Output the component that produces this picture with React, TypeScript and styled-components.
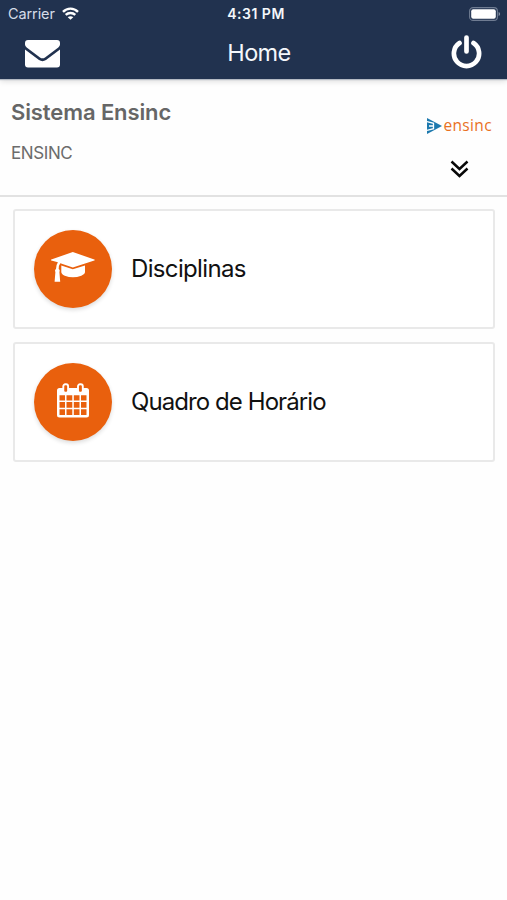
import React from 'react';
import styled, { createGlobalStyle } from 'styled-components';

const GlobalStyle = createGlobalStyle`
  * { box-sizing: border-box; }
  body { margin: 0; background: #fefefe; font-family: Inter, "Liberation Sans", sans-serif; }
  svg { display: block; flex: none; }
`;

const Screen = styled.div`
  height: 900px;
  display: flex;
  flex-direction: column;
  overflow: hidden;
`;

const Header = styled.header`
  height: 79px;
  flex: none;
  background: #21324f;
  color: #f4f7fb;
  box-shadow: 0 1px 1px #b4bac4, 0 2px 6px rgba(0, 0, 0, 0.15);
`;

const Bar = styled.div<{ $height: number; $padding: string }>`
  display: grid;
  grid-template-columns: 1fr auto 1fr;
  align-items: center;
  height: ${p => p.$height}px;
  padding: ${p => p.$padding};
`;

const Side = styled.div<{ $end?: boolean }>`
  display: flex;
  align-items: center;
  justify-content: ${p => (p.$end ? 'flex-end' : 'flex-start')};
  gap: 7px;
`;

const Label = styled.span<{ $size: number; $weight?: number; $spacing?: number; $color?: string }>`
  font-size: ${p => p.$size}px;
  font-weight: ${p => p.$weight ?? 400};
  letter-spacing: ${p => p.$spacing ?? 0}px;
  color: ${p => p.$color ?? 'inherit'};
  line-height: 1.2;
  white-space: nowrap;
`;

const ScreenTitle = styled(Label)`
  padding: 2px 0 0 11px;
`;

const Clock = styled(Label)`
  padding: 2px 0 0 3px;
`;

const IconButton = styled.button`
  padding: 0;
  border: 0;
  background: none;
  color: inherit;
`;

const Profile = styled.section`
  height: 118px;
  flex: none;
  display: flex;
  justify-content: space-between;
  padding: 20px 15px 0 11px;
  border-bottom: 2px solid #e2e2e2;
`;

const Names = styled.div`
  display: flex;
  flex-direction: column;
  gap: 18px;
`;

const Brand = styled.div`
  display: flex;
  flex-direction: column;
  align-items: center;
  padding-top: 17px;
  gap: 24px;
`;

const Logo = styled.div`
  display: flex;
  align-items: center;
  height: 20px;
  gap: 1px;
`;

const LogoName = styled.span`
  font: 500 15.5px/18px "Open Sans", sans-serif;
  letter-spacing: 0.35px;
  color: #e9711f;
  margin-top: -3px;
`;

const Menu = styled.main`
  display: flex;
  flex-direction: column;
  gap: 13px;
  padding: 12px 12px 0 13px;
`;

const Card = styled.a`
  height: 120px;
  display: flex;
  align-items: center;
  gap: 19px;
  padding-left: 19px;
  border: 2px solid #e9e9e9;
  border-radius: 3px;
  background: #fff;
  color: #111;
`;

const Disc = styled.div`
  width: 78px;
  height: 78px;
  border-radius: 50%;
  background: #e9600d;
  display: grid;
  place-items: center;
  box-shadow: 0 2px 4px rgba(0, 0, 0, 0.14);
  padding-bottom: 2px;
  margin-bottom: 1px;
`;

const WifiIcon = () => (
  <svg width="17" height="13" viewBox="0 0 17 13" fill="none" stroke="#fff" strokeWidth="2.4">
    <path d="M1 4.8C5.2.5 11.8.5 16 4.8M3.7 7.9c2.7-2.6 6.9-2.6 9.6 0" />
    <path d="M8.5 12.8 5.7 10.2c1.6-1.4 4-1.4 5.6 0Z" fill="#fff" stroke="none" />
  </svg>
);

const BatteryIcon = () => (
  <svg width="32" height="14" viewBox="0 0 32 14">
    <rect x=".6" y=".6" width="27.8" height="12.8" rx="3.5" fill="none" stroke="#6f7c92" strokeWidth="1.1" />
    <rect x="2.2" y="2.2" width="24.6" height="9.6" rx="2" fill="#fff" />
    <path d="M29.6 5v4q1.5-.6 1.5-2t-1.5-2Z" fill="#8792a5" />
  </svg>
);

const EnvelopeIcon = () => (
  <svg width="35" height="30" viewBox="0 -2 35 30" fill="#fff">
    <path d="M3 0h29q3 0 3 3v1.6q0 1.6-1.7 2.8L20 17.4q-2.5 1.9-5 0L1.7 7.4Q0 6.2 0 4.6V3Q0 0 3 0Z" />
    <path d="M0 9.6 14 20q3.5 2.3 7 0L35 9.6V24.5q0 3-3 3H3q-3 0-3-3Z" />
  </svg>
);

const PowerIcon = () => (
  <svg width="31" height="36" viewBox="0 .5 31 36" fill="none" stroke="#fff" strokeWidth="4.7" strokeLinecap="round">
    <path d="M8.5 8.5a12.6 12.6 0 1 0 14 0M15.5 3v14" />
  </svg>
);

const ChevronsIcon = () => (
  <svg width="20" height="18" viewBox="0 0 20 18" fill="none" stroke="#080808" strokeWidth="2.5">
    <path d="m1.5 1.5 8 7.5 8-7.5M1.5 8.5 9.5 16l8-7.5" />
  </svg>
);

const LogoMark = () => (
  <svg width="15" height="16" viewBox="0 0 15 16">
    <path d="M0 0 15 8 0 16Z" fill="#1d79ae" />
    <path d="M0 3.7 6.5 5.3v5.4L0 12.3M2 8h4.5" fill="none" stroke="#fff" strokeWidth="1.3" />
  </svg>
);

const CapIcon = () => (
  <svg width="45" height="31" viewBox="0.7 0 45 31" fill="#fff">
    <path d="M22.5 0 44 7.5q1 .5 0 1L22.5 15.5 10 11.3Q8.5 13 8.4 17q1.6 1.2.7 3l.8 9.7H4.3L5.1 20q-1-1.7.6-3 .1-4.3 1.9-6.7L1 8.5q-1-.5 0-1Z" />
    <path d="M11 13.5 22.5 17.3 34.7 13.5V20q0 2-3.7 3.7-8.5 3.3-16.5 0-3.5-1.5-3.5-3.7Z" />
  </svg>
);

const CalendarIcon = () => (
  <svg width="33" height="35" viewBox="0.5 0 33 35">
    <path
      fill="#fff"
      fillRule="evenodd"
      d="M3 5H30q2.5 0 2.5 2.5V32q0 2.5-2.5 2.5H3Q.5 34.5.5 32V7.5Q.5 5 3 5ZM3 12.3v5.2h5.5v-5.2Zm7 0v5.2h5.8v-5.2Zm7.3 0v5.2H23v-5.2Zm7.2 0v5.2h5.5v-5.2ZM3 19v5.7h5.5V19Zm7 0v5.7h5.8V19Zm7.3 0v5.7H23V19Zm7.2 0v5.7h5.5V19ZM3 26.2v5.8h5.5v-5.8Zm7 0v5.8h5.8v-5.8Zm7.3 0v5.8H23v-5.8Zm7.2 0v5.8h5.5v-5.8Z"
    />
    <g fill="#e9600d" stroke="#fff" strokeWidth="1.9">
      <rect x="6.8" y="1.3" width="4.8" height="8.5" rx="2" />
      <rect x="21.5" y="1.3" width="4.8" height="8.5" rx="2" />
    </g>
  </svg>
);

const items = [
  { title: 'Disciplinas', spacing: -0.65, Icon: CapIcon },
  { title: 'Quadro de Horário', spacing: -0.92, Icon: CalendarIcon },
];

export default function App() {
  return (
    <Screen>
      <GlobalStyle />
      <Header>
        <Bar $height={27} $padding="0 6px 0 8px">
          <Side>
            <Label $size={14.5} $spacing={-0.1} $color="#d5dce8">Carrier</Label>
            <WifiIcon />
          </Side>
          <Clock $size={14} $weight={600} $spacing={0.5}>4:31 PM</Clock>
          <Side $end><BatteryIcon /></Side>
        </Bar>
        <Bar $height={51} $padding="0 25px">
          <Side><IconButton aria-label="Mensagens"><EnvelopeIcon /></IconButton></Side>
          <ScreenTitle $size={23.5} $spacing={-0.6}>Home</ScreenTitle>
          <Side $end><IconButton aria-label="Sair"><PowerIcon /></IconButton></Side>
        </Bar>
      </Header>
      <Profile>
        <Names>
          <Label $size={22} $weight={600} $spacing={-0.1} $color="#666">Sistema Ensinc</Label>
          <Label $size={17} $spacing={-0.4} $color="#6c6c6c">ENSINC</Label>
        </Names>
        <Brand>
          <Logo><LogoMark /><LogoName>ensinc</LogoName></Logo>
          <IconButton aria-label="Expandir"><ChevronsIcon /></IconButton>
        </Brand>
      </Profile>
      <Menu>
        {items.map(({ title, spacing, Icon }) => (
          <Card key={title}>
            <Disc><Icon /></Disc>
            <Label $size={24} $spacing={spacing}>{title}</Label>
          </Card>
        ))}
      </Menu>
    </Screen>
  );
}
